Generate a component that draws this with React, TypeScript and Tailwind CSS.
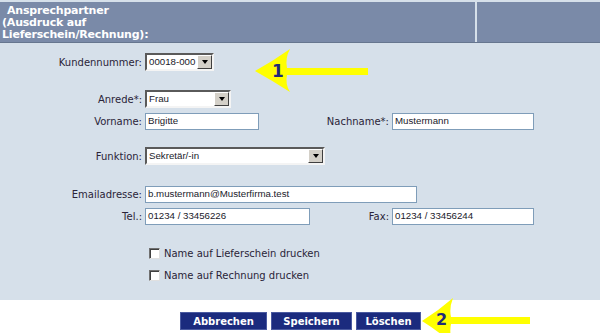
import React from "react";

const lbl = "font-['DejaVu_Sans',sans-serif] text-[10px] text-[#2a2438] text-right";
const fld = "font-['Liberation_Sans',Arial,sans-serif] text-[9.7px] text-[#1a1a2a]";

function TextBox({ value, w }: { value: string; w: string }) {
  return (
    <div className={`${w} h-[17px] bg-white border border-[#7f9db9] flex items-center pl-[2px] ${fld}`}>
      {value}
    </div>
  );
}

function Select({ value, w }: { value: string; w: string }) {
  return (
    <div className={`${w} h-[18px] bg-white border-2 border-t-[#5a5a5a] border-l-[#5a5a5a] border-b-[#f4f4f4] border-r-[#f4f4f4] flex items-center`}>
      <span className={`flex-1 pl-[2px] ${fld}`}>{value}</span>
      <span className="w-[15px] h-[14px] bg-[#d4d0c8] border border-t-white border-l-white border-b-[#404040] border-r-[#404040] flex items-center justify-center">
        <span className="w-0 h-0 border-l-[3.5px] border-r-[3.5px] border-t-[4px] border-l-transparent border-r-transparent border-t-black" />
      </span>
    </div>
  );
}

function Check({ text }: { text: string }) {
  return (
    <div className="flex items-center pl-[149px] h-[12px]">
      <span className="w-[11px] h-[11px] bg-white border border-t-[#707070] border-l-[#707070] border-b-[#e0e0e0] border-r-[#e0e0e0] shadow-[inset_1px_1px_0_#404040]" />
      <span className={`${lbl} ml-[4px]`}>{text}</span>
    </div>
  );
}

export default function App() {
  return (
    <div className="relative w-[600px] h-[333px] overflow-hidden bg-white">
      {/* header */}
      <div className="h-[2px] bg-[#d6e0ea]" />
      <div className="flex h-[41px] border-b border-[#66768f]">
        <div className="w-[475px] bg-[#7a8aa8] pt-[3px] pl-[2px] font-['DejaVu_Sans',sans-serif] text-[11px] font-bold tracking-[-0.2px] leading-[12px] text-white">
          <div className="pl-[5px]">Ansprechpartner</div>
          <div>(Ausdruck auf</div>
          <div>Lieferschein/Rechnung):</div>
        </div>
        <div className="w-[2px] bg-[#d6e0ea]" />
        <div className="flex-1 bg-[#7a8aa8]" />
      </div>

      {/* form body */}
      <div className="h-[257px] bg-[#d6e0ea] pt-[10px]">
        <div className="flex items-center gap-[3px] h-[18px]">
          <div className={`${lbl} w-[142px]`}>Kundennummer:</div>
          <Select value="00018-000" w="w-[69px]" />
        </div>

        <div className="flex items-center gap-[3px] h-[18px] mt-[19px]">
          <div className={`${lbl} w-[142px]`}>Anrede*:</div>
          <Select value="Frau" w="w-[86px]" />
        </div>

        <div className="flex items-center h-[18px] mt-[4px]">
          <div className={`${lbl} w-[142px] mr-[3px]`}>Vorname:</div>
          <TextBox value="Brigitte" w="w-[114px]" />
          <div className={`${lbl} w-[130px] mr-[3px]`}>Nachname*:</div>
          <TextBox value="Mustermann" w="w-[142px]" />
        </div>

        <div className="flex items-center gap-[3px] h-[18px] mt-[17px]">
          <div className={`${lbl} w-[142px]`}>Funktion:</div>
          <Select value="Sekretär/-in" w="w-[180px]" />
        </div>

        <div className="flex items-center gap-[3px] h-[18px] mt-[20px]">
          <div className={`${lbl} w-[142px]`}>Emailadresse:</div>
          <TextBox value="b.mustermann@Musterfirma.test" w="w-[272px]" />
        </div>

        <div className="flex items-center h-[18px] mt-[4px]">
          <div className={`${lbl} w-[142px] mr-[3px]`}>Tel.:</div>
          <TextBox value="01234 / 33456226" w="w-[165px]" />
          <div className={`${lbl} w-[79px] mr-[3px]`}>Fax:</div>
          <TextBox value="01234 / 33456244" w="w-[142px]" />
        </div>

        <div className="mt-[22px]">
          <Check text="Name auf Lieferschein drucken" />
        </div>
        <div className="mt-[10px]">
          <Check text="Name auf Rechnung drucken" />
        </div>
      </div>

      {/* buttons */}
      <div className="flex gap-[4px] pl-[180px] pt-[12px] font-['DejaVu_Sans',sans-serif] text-[10px] font-bold text-white">
        <button className="w-[87px] h-[18px] bg-[#1b2b7e] border border-[#4a5aa0]">Abbrechen</button>
        <button className="w-[81px] h-[18px] bg-[#1b2b7e] border border-[#4a5aa0]">Speichern</button>
        <button className="w-[65px] h-[18px] bg-[#1b2b7e] border border-[#4a5aa0]">Löschen</button>
      </div>

      {/* annotation arrows */}
      <svg className="absolute inset-0 pointer-events-none" width="600" height="333" viewBox="0 0 600 333">
        <path d="M255 71 Q273 61 290 49 Q285 58 287 68 L368 68 L368 75 L287 75 Q285 84 290 92 Q273 81 255 71 Z" fill="#ffff00" />
        <path d="M422 321 Q438 311 453 298 Q449 308 451 317 L530 317 L530 324 L451 324 Q449 334 453 344 Q438 331 422 321 Z" fill="#ffff00" />
      </svg>
      <span className="absolute left-[272px] top-[61px] font-['DejaVu_Sans',sans-serif] text-[17px] font-bold leading-[20px] text-[#1f2b7b]">1</span>
      <span className="absolute left-[436px] top-[310px] font-['DejaVu_Sans',sans-serif] text-[16px] font-bold leading-[20px] text-[#1f2b7b]">2</span>
    </div>
  );
}
